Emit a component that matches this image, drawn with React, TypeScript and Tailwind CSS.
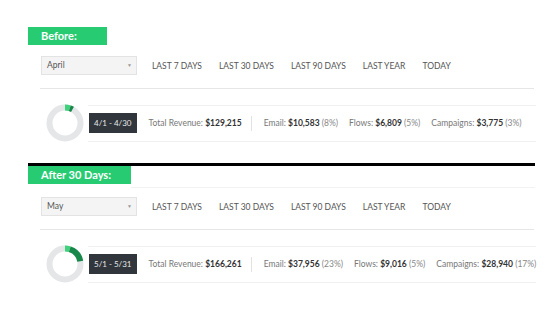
import React from "react";

type Stat = { label: string; value: string; pct?: string };

type SectionProps = {
  title: string;
  titleWidth: string;
  month: string;
  range: string;
  total: string;
  stats: Stat[];
  flowsPct: number;
  campaignsPct: number;
  top?: boolean;
};

const ranges = ["LAST 7 DAYS", "LAST 30 DAYS", "LAST 90 DAYS", "LAST YEAR", "TODAY"];

function Donut({ flowsPct, campaignsPct }: { flowsPct: number; campaignsPct: number }) {
  const r = 15.5;
  const c = 2 * Math.PI * r;
  const a = (flowsPct / 100) * c;
  const b = (campaignsPct / 100) * c;
  return (
    <svg width="38" height="38" viewBox="0 0 38 38" className="shrink-0">
      <circle cx="19" cy="19" r={r} fill="none" stroke="#e4e6e8" strokeWidth="6" />
      <g transform="rotate(-90 19 19)">
        <circle cx="19" cy="19" r={r} fill="none" stroke="#3fd27c" strokeWidth="6" strokeDasharray={`${a} ${c}`} />
        <circle
          cx="19"
          cy="19"
          r={r}
          fill="none"
          stroke="#17874a"
          strokeWidth="6"
          strokeDasharray={`${b} ${c}`}
          strokeDashoffset={-a}
        />
      </g>
    </svg>
  );
}

function Section(p: SectionProps) {
  return (
    <div className="flex flex-col whitespace-nowrap">
      <div className="flex items-start h-[18px]">
        <div
          className={`h-[18px] ${p.titleWidth} bg-[#27cb72] text-white font-bold text-[11px] leading-[18px] pl-[13px]`}
        >
          {p.title}
        </div>
        {!p.top && <div className="flex-1 mt-[21px] border-t border-[#f2f2f2]" />}
      </div>

      <div className={`flex items-center ml-[13px] h-[19px] ${p.top ? "mt-[11px]" : "mt-[13px]"}`}>
        <div className="w-[96px] h-[19px] bg-[#f4f4f4] border border-[#e3e3e3] flex items-center justify-between pl-[5px] pr-[4px] text-[8.5px] text-[#555]">
          <span>{p.month}</span>
          <span className="text-[5px] text-[#999]">▼</span>
        </div>
        <div className="flex items-center gap-[17px] ml-[15px] mt-[2px] text-[8.5px] text-[#555]">
          {ranges.map((r) => (
            <span key={r}>{r}</span>
          ))}
        </div>
      </div>

      <div className="ml-[12px] mr-[1px] mt-[13px] border-t border-[#e6e6e6]" />

      <div className="flex items-center ml-[18px] -mr-[1px] mt-[15px]">
        <Donut flowsPct={p.flowsPct} campaignsPct={p.campaignsPct} />
        <div className="flex-1 ml-[4px] h-[37px] border-y border-[#f0f0f0] flex items-center text-[8.5px] text-[#777]">
          <div className="ml-[1px] h-[20px] px-[5px] bg-[#30363c] text-[#e8e8e8] flex items-center text-[8px]">
            {p.range}
          </div>
          <span className="ml-[12px]">
            Total Revenue: <b className="text-[#333]">{p.total}</b>
          </span>
          <div className="ml-[9px] mr-[12px] h-[15px] border-l border-[#e2e2e2]" />
          <div className="flex items-center gap-[11px]">
            {p.stats.map((s) => (
              <span key={s.label}>
                {s.label}: <b className="text-[#333]">{s.value}</b> <span className="text-[#888]">{s.pct}</span>
              </span>
            ))}
          </div>
        </div>
      </div>
    </div>
  );
}

export default function App() {
  return (
    <div
      className="w-[560px] h-[315px] bg-white overflow-hidden pt-[27px] pl-[28px]"
      style={{ fontFamily: "Lato, 'Open Sans', Arial, sans-serif" }}
    >
      <div className="w-[507px]">
        <Section
          top
          title="Before:"
          titleWidth="w-[79px]"
          month="April"
          range="4/1 - 4/30"
          total="$129,215"
          stats={[
            { label: "Email", value: "$10,583", pct: "(8%)" },
            { label: "Flows", value: "$6,809", pct: "(5%)" },
            { label: "Campaigns", value: "$3,775", pct: "(3%)" },
          ]}
          flowsPct={5}
          campaignsPct={3}
        />
      </div>
      <div className="w-[507px] mt-[21px] border-t-[3px] border-black">
        <Section
          title="After 30 Days:"
          titleWidth="w-[103px]"
          month="May"
          range="5/1 - 5/31"
          total="$166,261"
          stats={[
            { label: "Email", value: "$37,956", pct: "(23%)" },
            { label: "Flows", value: "$9,016", pct: "(5%)" },
            { label: "Campaigns", value: "$28,940", pct: "(17%)" },
          ]}
          flowsPct={5}
          campaignsPct={17}
        />
      </div>
    </div>
  );
}
